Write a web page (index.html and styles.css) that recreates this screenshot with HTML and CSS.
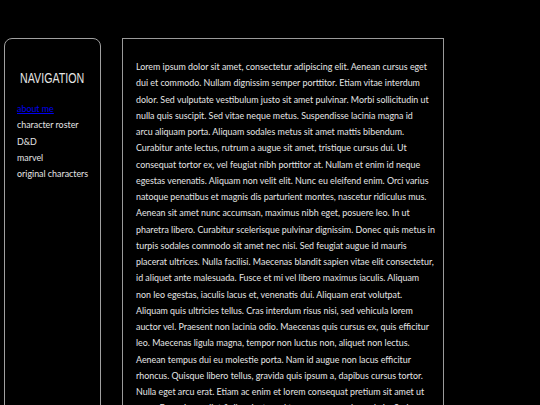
FILE: index.html
```html
<!DOCTYPE html>
<html lang="en">
<head>
<meta charset="utf-8">
<title>Navigation</title>
<link rel="stylesheet" href="styles.css">
</head>
<body>
<div class="page">
  <nav class="sidebar">
    <h2 class="nav-title"><span>NAVIGATION</span></h2>
    <ul class="nav-list">
      <li><a href="#" class="nav-link active">about me</a></li>
      <li><a href="#" class="nav-link">character roster</a></li>
      <li><a href="#" class="nav-link">D&amp;D</a></li>
      <li><a href="#" class="nav-link">marvel</a></li>
      <li><a href="#" class="nav-link">original characters</a></li>
    </ul>
  </nav>
  <main class="content">
    <p>Lorem ipsum dolor sit amet, consectetur adipiscing elit. Aenean cursus eget<br>
dui et commodo. Nullam dignissim semper porttitor. Etiam vitae interdum<br>
dolor. Sed vulputate vestibulum justo sit amet pulvinar. Morbi sollicitudin ut<br>
nulla quis suscipit. Sed vitae neque metus. Suspendisse lacinia magna id<br>
arcu aliquam porta. Aliquam sodales metus sit amet mattis bibendum.<br>
Curabitur ante lectus, rutrum a augue sit amet, tristique cursus dui. Ut<br>
consequat tortor ex, vel feugiat nibh porttitor at. Nullam et enim id neque<br>
egestas venenatis. Aliquam non velit elit. Nunc eu eleifend enim. Orci varius<br>
natoque penatibus et magnis dis parturient montes, nascetur ridiculus mus.<br>
Aenean sit amet nunc accumsan, maximus nibh eget, posuere leo. In ut<br>
pharetra libero. Curabitur scelerisque pulvinar dignissim. Donec quis metus in<br>
turpis sodales commodo sit amet nec nisi. Sed feugiat augue id mauris<br>
placerat ultrices. Nulla facilisi. Maecenas blandit sapien vitae elit consectetur,<br>
id aliquet ante malesuada. Fusce et mi vel libero maximus iaculis. Aliquam<br>
non leo egestas, iaculis lacus et, venenatis dui. Aliquam erat volutpat.<br>
Aliquam quis ultricies tellus. Cras interdum risus nisi, sed vehicula lorem<br>
auctor vel. Praesent non lacinia odio. Maecenas quis cursus ex, quis efficitur<br>
leo. Maecenas ligula magna, tempor non luctus non, aliquet non lectus.<br>
Aenean tempus dui eu molestie porta. Nam id augue non lacus efficitur<br>
rhoncus. Quisque libero tellus, gravida quis ipsum a, dapibus cursus tortor.<br>
Nulla eget arcu erat. Etiam ac enim et lorem consequat pretium sit amet ut<br>
nunc. Fusce imperdiet finibus justo, vel tempus urna malesuada in. Sed<br>
vitae ligula sed nibh aliquet fermentum.</p>
  </main>
</div>
</body>
</html>
```
FILE: styles.css
```css
html, body {
  margin: 0;
  padding: 0;
  background: #000;
}
body {
  font-family: "Lato", "Liberation Sans", sans-serif;
  font-size: 8.9px;
  line-height: 16.25px;
  color: #e6e6e6;
  overflow: hidden;
  height: 405px;
}
.page {
  display: flex;
  align-items: stretch;
  gap: 21px;
  padding: 38px 0 0 4px;
  min-height: 600px;
}
.sidebar {
  width: 97px;
  flex: none;
  border: 1px solid #a0a0a0;
  border-radius: 8px;
  padding: 31px 12px 0 12px;
  box-sizing: border-box;
}
.nav-title {
  margin: 0 -12px 15px -12px;
  text-align: center;
  font-family: "Liberation Sans", sans-serif;
  font-weight: normal;
  font-size: 14px;
  line-height: 16px;
  color: #e6e6e6;
}
.nav-title span {
  display: inline-block;
  transform: scaleX(0.76);
}
.nav-list {
  list-style: none;
  margin: 0;
  padding: 0;
  white-space: nowrap;
}
.nav-link {
  color: #e6e6e6;
  text-decoration: none;
}
.nav-link.active {
  color: #0000ee;
  text-decoration: underline;
}
.content {
  width: 322px;
  flex: none;
  border: 1px solid #9a9a9a;
  padding: 20px 8px 0 13px;
  box-sizing: border-box;
}
.content p {
  margin: 0;
}
```
